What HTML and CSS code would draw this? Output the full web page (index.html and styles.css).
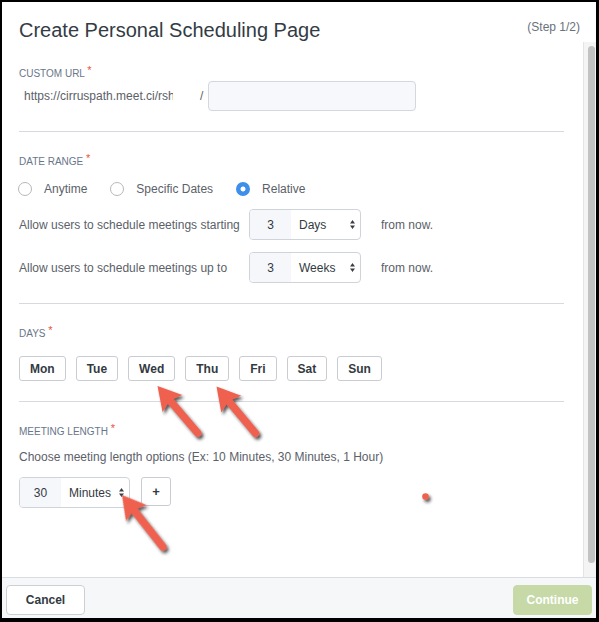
FILE: index.html
```html
<!DOCTYPE html>
<html>
<head>
<meta charset="utf-8">
<link rel="stylesheet" href="styles.css">
</head>
<body>
<div class="modal">
  <header class="head">
    <h1 class="title">Create Personal Scheduling Page</h1>
    <span class="step">(Step 1/2)</span>
  </header>
  <div class="body">
    <div class="content">
      <section class="sec">
        <div class="label">Custom URL <span class="req">*</span></div>
        <div class="url-row">
          <span class="url-prefix">https://cirruspath.meet.ci/rsh</span>
          <span class="slash">/</span>
          <div class="url-input"></div>
        </div>
      </section>
      <section class="sec">
        <div class="label">Date Range <span class="req">*</span></div>
        <div class="radios">
          <label class="radio"><span class="radio-dot"></span>Anytime</label>
          <label class="radio"><span class="radio-dot"></span>Specific Dates</label>
          <label class="radio"><span class="radio-dot checked"></span>Relative</label>
        </div>
        <div class="range-row">
          <span class="range-text">Allow users to schedule meetings starting</span>
          <div class="group">
            <span class="num">3</span>
            <span class="sel">Days<svg class="arr" width="5" height="9" viewBox="0 0 5 9"><path d="M0 3.6 L2.5 0 L5 3.6Z M0 5.4 L2.5 9 L5 5.4Z"/></svg></span>
          </div>
          <span class="from">from now.</span>
        </div>
        <div class="range-row second">
          <span class="range-text">Allow users to schedule meetings up to</span>
          <div class="group">
            <span class="num">3</span>
            <span class="sel">Weeks<svg class="arr" width="5" height="9" viewBox="0 0 5 9"><path d="M0 3.6 L2.5 0 L5 3.6Z M0 5.4 L2.5 9 L5 5.4Z"/></svg></span>
          </div>
          <span class="from">from now.</span>
        </div>
      </section>
      <section class="sec">
        <div class="label">Days <span class="req">*</span></div>
        <div class="days">
          <button class="day">Mon</button>
          <button class="day">Tue</button>
          <button class="day">Wed</button>
          <button class="day">Thu</button>
          <button class="day">Fri</button>
          <button class="day">Sat</button>
          <button class="day">Sun</button>
        </div>
      </section>
      <section class="sec last">
        <div class="label">Meeting Length <span class="req">*</span></div>
        <p class="desc">Choose meeting length options (Ex: 10 Minutes, 30 Minutes, 1 Hour)</p>
        <div class="len-row">
          <div class="group small">
            <span class="num">30</span>
            <span class="sel">Minutes<svg class="arr" width="5" height="9" viewBox="0 0 5 9"><path d="M0 3.6 L2.5 0 L5 3.6Z M0 5.4 L2.5 9 L5 5.4Z"/></svg></span>
          </div>
          <button class="plus">+</button>
        </div>
      </section>
    </div>
    <div class="scrollbar"><div class="thumb"></div></div>
  </div>
  <footer class="foot">
    <button class="btn">Cancel</button>
    <button class="btn btn-primary">Continue</button>
  </footer>
</div>

<svg class="annot" width="599" height="622" viewBox="0 0 599 622">
  <defs>
    <filter id="sh" x="-50%" y="-50%" width="200%" height="200%">
      <feDropShadow dx="2" dy="2.5" stdDeviation="1.4" flood-color="#222" flood-opacity="0.75"/>
    </filter>
  </defs>
  <g filter="url(#sh)" fill="#ef6150" stroke="#ef6150">
    <g transform="translate(157.5,386) rotate(-40.5)">
      <polygon points="0,0 13,23 0,19 -13,23" stroke="none"/>
      <line x1="0" y1="17" x2="0" y2="62" stroke-width="7.5" stroke-linecap="round"/>
    </g>
    <g transform="translate(216.5,386.5) rotate(-39.8)">
      <polygon points="0,0 13,23 0,19 -13,23" stroke="none"/>
      <line x1="0" y1="17" x2="0" y2="61" stroke-width="7.5" stroke-linecap="round"/>
    </g>
    <g transform="translate(122,495) rotate(-38.2)">
      <polygon points="0,0 13,23 0,19 -13,23" stroke="none"/>
      <line x1="0" y1="17" x2="0" y2="66" stroke-width="7.5" stroke-linecap="round"/>
    </g>
    <circle cx="425.5" cy="496.5" r="3.3" stroke="none"/>
  </g>
</svg>
</body>
</html>
```
FILE: styles.css
```css
* { box-sizing: border-box; margin: 0; padding: 0; }
html, body { height: 100%; }
body {
  background: #000;
  font-family: "Liberation Sans", Arial, sans-serif;
  font-size: 12px;
  color: #5b6169;
  overflow: hidden;
}
.modal {
  margin: 2px 0 0 2px;
  width: 594px;
  height: 616px;
  background: #fff;
  display: flex;
  flex-direction: column;
}
.head {
  height: 40px;
  flex: none;
  display: flex;
  justify-content: space-between;
  align-items: flex-start;
  padding: 16px 16px 0 17px;
}
.title {
  font-size: 20px;
  line-height: 24px;
  font-weight: normal;
  color: #333b45;
}
.step {
  font-size: 12px;
  line-height: 14px;
  margin-top: 2px;
  color: #69717c;
}
.body {
  flex: 1;
  display: flex;
  min-height: 0;
}
.content {
  flex: 1;
  padding: 2px 19px 0 17px;
}
.scrollbar {
  width: 13px;
  flex: none;
  background: #f4f4f4;
  border-left: 1px solid #e4e4e4;
  padding: 4px 0 14px 4px;
}
.thumb {
  width: 7px;
  height: 100%;
  background: #c2c2c2;
  border-radius: 4px;
}
.sec {
  padding: 24px 0 20px;
  border-bottom: 1px solid #d6d9dd;
}
.sec.last { border-bottom: none; }
.label {
  font-size: 10px;
  line-height: 12px;
  height: 12px;
  text-transform: uppercase;
  color: #687689;
}
.req {
  color: #e8533e;
  font-size: 11px;
  line-height: 0;
  vertical-align: 3px;
}
.url-row {
  display: flex;
  align-items: center;
  height: 30px;
  margin-top: 1px;
}
.url-prefix {
  width: 154px;
  padding-left: 5px;
  overflow: hidden;
  white-space: nowrap;
}
.slash { margin-left: 27px; }
.url-input {
  margin-left: 5px;
  width: 208px;
  height: 30px;
  border: 1px solid #d3d7de;
  border-radius: 4px;
  background: #f7f8fb;
}
.radios {
  display: flex;
  align-items: center;
  height: 16px;
  margin-top: 13px;
  margin-left: -1px;
}
.radio {
  display: flex;
  align-items: center;
  gap: 12px;
  margin-right: 23px;
}
.radio-dot {
  width: 14px;
  height: 14px;
  border-radius: 50%;
  border: 1px solid #b8b8b8;
  background: #fff;
}
.radio-dot.checked {
  border: none;
  background: radial-gradient(circle, #fff 0 2.2px, #3d8fe9 2.8px);
}
.range-row {
  display: flex;
  align-items: center;
  height: 31px;
  margin-top: 12px;
}
.range-row.second { margin-top: 12px; }
.range-text { width: 230px; }
.group {
  display: flex;
  width: 112px;
  height: 31px;
  border: 1px solid #cfd3da;
  border-radius: 4px;
  overflow: hidden;
  color: #333a42;
}
.group .num {
  width: 41px;
  background: #f5f7fb;
  display: flex;
  align-items: center;
  justify-content: center;
}
.group .sel {
  flex: 1;
  display: flex;
  align-items: center;
  justify-content: space-between;
  padding: 0 5px 0 8px;
}
.arr { fill: #3a3f46; }
.from { margin-left: 20px; }
.days {
  display: flex;
  gap: 10px;
  margin-top: 16px;
}
.day {
  height: 25px;
  padding: 0 10px;
  border: 1px solid #c9cdd3;
  border-radius: 3px;
  background: #fff;
  font: bold 12px "Liberation Sans", Arial, sans-serif;
  color: #333a42;
}
.desc {
  margin-top: 11px;
  line-height: 16px;
}
.len-row {
  display: flex;
  align-items: flex-start;
  margin-top: 12px;
}
.group.small { width: 111px; }
.plus {
  margin-left: 11px;
  width: 30px;
  height: 29px;
  border: 1px solid #c9cdd3;
  border-radius: 3px;
  background: #fff;
  font: bold 13px "Liberation Sans", Arial, sans-serif;
  color: #333a42;
}
.foot {
  height: 41px;
  flex: none;
  border-top: 1px solid #d9dce0;
  background: #f6f7f9;
  display: flex;
  justify-content: space-between;
  padding: 7px 4px 0 4px;
}
.btn {
  width: 79px;
  height: 30px;
  border: 1px solid #ccd0d6;
  border-radius: 4px;
  background: #fff;
  font: bold 12px "Liberation Sans", Arial, sans-serif;
  color: #333a42;
}
.btn-primary {
  background: #c6d9a7;
  border-color: #c6d9a7;
  color: #fff;
}
.annot {
  position: absolute;
  top: 0;
  left: 0;
  pointer-events: none;
}
```
